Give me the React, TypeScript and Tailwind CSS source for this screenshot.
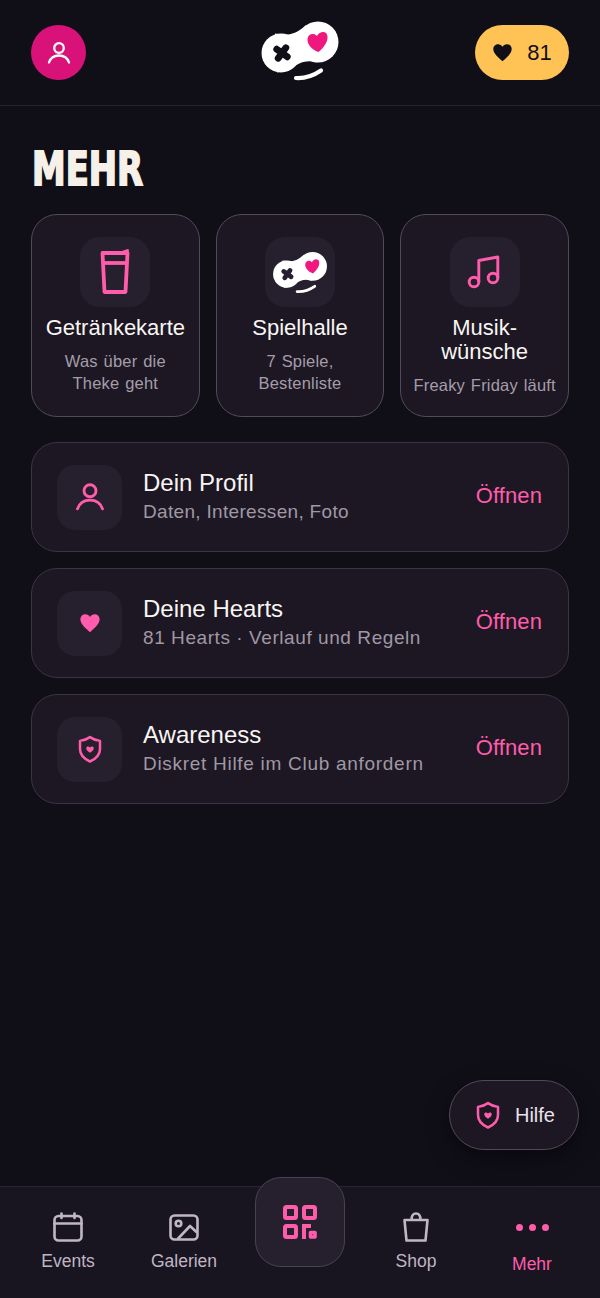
import React from "react";

function Logo({ hole, className }: { hole: string; className: string }) {
  return (
    <svg viewBox="0 0 100 80" className={className}>
      <circle cx="31" cy="43" r="19.500" fill="#fff" />
      <circle cx="68" cy="32" r="20.500" fill="#fff" />
      <path d="M25 23.500C35 25 43 27 56 15L67 52.500C57 49 49 53 43 57C37 60 33 62 27 62.500Z" fill="#fff" />
      <g transform="translate(32 43) rotate(36)">
        <path d="M-6.500 0H6.500M0 -6.500V6.500" fill="none" stroke={hole} strokeWidth="6.800" strokeLinecap="round" />
      </g>
      <path d="M68.500 42C61 39.500 57 33.500 57.500 29C58 24 63.500 22.500 67 26C69.500 21 77 20 77.500 26.500C78 32 73.500 38 68.500 42Z" fill="#f0187f" />
      <path d="M46 68C55 68.500 63 66 71 60.500" fill="none" stroke="#fff" strokeWidth="4.200" strokeLinecap="round" />
    </svg>
  );
}

function UserIcon({ className }: { className: string }) {
  return (
    <svg viewBox="0 0 24 24" fill="none" stroke="currentColor" strokeWidth="2.300" strokeLinecap="round" className={className}>
      <circle cx="12" cy="7" r="4.800" />
      <path d="M2 21.500C3.500 17 7 14.500 12 14.500S20.500 17 22 21.500" />
    </svg>
  );
}

function ShieldHeart({ className }: { className: string }) {
  return (
    <svg viewBox="0 0 24 24" fill="none" stroke="currentColor" strokeWidth="2" strokeLinejoin="round" className={className}>
      <path d="M12 2.500C14.500 4.300 17 5.200 20 5.500V12C20 16.500 17 19.800 12 22C7 19.800 4 16.500 4 12V5.500C7 5.200 9.500 4.300 12 2.500Z" />
      <path d="M12 15C9.800 13.500 9 12.400 9 11.300C9 9.800 10.900 9.400 12 10.700C13.100 9.400 15 9.800 15 11.300C15 12.400 14.200 13.500 12 15Z" fill="currentColor" stroke="none" />
    </svg>
  );
}

function Heart({ className }: { className: string }) {
  return (
    <svg viewBox="0 0 24 24" fill="currentColor" className={className}>
      <path d="M12 22C5.500 16.500 1.500 12.500 1.500 8C1.500 4.500 4.200 2.500 7 2.500C9 2.500 11 3.500 12 5.500C13 3.500 15 2.500 17 2.500C19.800 2.500 22.500 4.500 22.500 8C22.500 12.500 18.500 16.500 12 22Z" />
    </svg>
  );
}

function Glass({ className }: { className: string }) {
  return (
    <svg viewBox="0 0 32 46" fill="none" stroke="currentColor" strokeWidth="3.800" strokeLinejoin="round" className={className}>
      <path d="M3.500 4H28.500L26.500 43H5.500Z" />
      <path d="M4 14H28" />
      <path d="M22.500 3L29 0.800V4Z" fill="currentColor" strokeWidth="1.600" />
    </svg>
  );
}

function MusicIcon({ className }: { className: string }) {
  return (
    <svg viewBox="0 0 40 40" fill="none" stroke="currentColor" strokeWidth="2.900" strokeLinejoin="round" className={className}>
      <circle cx="9" cy="30" r="4.800" />
      <circle cx="28" cy="26" r="4.800" />
      <path d="M13.800 30V8.500L32.800 5V26" />
    </svg>
  );
}

function CalendarIcon({ className }: { className: string }) {
  return (
    <svg viewBox="0 0 30 30" fill="none" stroke="currentColor" strokeWidth="2.600" strokeLinecap="round" className={className}>
      <rect x="1.500" y="4" width="27" height="24.500" rx="4" />
      <path d="M1.500 11.500H28.500M8.500 1.500V6M21.500 1.500V6" />
    </svg>
  );
}

function PictureIcon({ className }: { className: string }) {
  return (
    <svg viewBox="0 0 30 27" fill="none" stroke="currentColor" strokeWidth="2.600" strokeLinejoin="round" className={className}>
      <rect x="1.500" y="1.500" width="27" height="24" rx="4" />
      <circle cx="9.500" cy="9.500" r="2.800" />
      <path d="M8.700 25L21 12L28 18.500" />
    </svg>
  );
}

function Bag({ className }: { className: string }) {
  return (
    <svg viewBox="0 0 28 32" fill="none" stroke="currentColor" strokeWidth="2.600" strokeLinejoin="round" className={className}>
      <path d="M2.500 9H25.500L23.500 29.500H4.500Z" />
      <path d="M9.500 9C9.500 5 11 2.500 14 2.500S18.500 5 18.500 9" />
    </svg>
  );
}

function Qr({ className }: { className: string }) {
  return (
    <svg viewBox="0 0 36 36" fill="none" stroke="currentColor" strokeWidth="4" strokeLinejoin="round" className={className}>
      <rect x="3" y="3" width="11" height="11" rx="1.500" />
      <rect x="22" y="3" width="11" height="11" rx="1.500" />
      <rect x="3" y="22" width="11" height="11" rx="1.500" />
      <path d="M20 22H29M22 20V35" />
      <rect x="28.500" y="28.500" width="4.500" height="4.500" strokeWidth="3.600" />
    </svg>
  );
}

function TopCard({ title, sub, icon }: { title: React.ReactNode; sub: React.ReactNode; icon: React.ReactNode }) {
  return (
    <div className="flex h-[203px] flex-col items-center rounded-[26px] border border-[#524a5b] bg-[#1c1723] pt-[22px] text-center">
      <div className="flex h-[70px] w-[70px] items-center justify-center rounded-[20px] bg-[#261f2d]">{icon}</div>
      <div className="mt-[9px] text-[22px] leading-[24px] text-[#f8f5f2]">{title}</div>
      <div className="mt-[10px] text-[16.5px] leading-[22px] tracking-[0.2px] [word-spacing:1px] text-[#a59daa]">{sub}</div>
    </div>
  );
}

function Row({ title, sub, icon, track }: { title: string; sub: string; icon: React.ReactNode; track: string }) {
  return (
    <div className="flex h-[110px] items-center rounded-[26px] border border-[#3c3444] bg-[#1c1723] pr-[26px] pl-[25px]">
      <div className="flex h-[65px] w-[65px] items-center justify-center rounded-[18px] bg-[#261f2d]">{icon}</div>
      <div className="ml-[21px] flex-1">
        <div className="text-[24px] leading-[28px] text-[#f8f5f2]">{title}</div>
        <div className={`mt-[1px] text-[19px] leading-[28px] text-[#a098a5] ${track}`}>{sub}</div>
      </div>
      <div className="pb-[3px] text-[22px] tracking-[0.1px] text-[#ff5cab]">Öffnen</div>
    </div>
  );
}

function NavItem({ label, icon, active }: { label: string; icon: React.ReactNode; active?: boolean }) {
  return (
    <div className={`flex flex-col items-center ${active ? "text-[#ff5cab]" : "text-[#c0b6c6]"}`}>
      <div className="flex h-[32px] items-center justify-center">{icon}</div>
      <div className={`text-[17.5px] leading-[24px] ${active ? "mt-[9px]" : "mt-[6px]"}`}>{label}</div>
    </div>
  );
}

export default function App() {
  return (
    <div className="relative flex min-h-[1298px] flex-col bg-[#100e17] font-['Liberation_Sans',sans-serif]">
      <header className="grid h-[106px] grid-cols-3 items-center border-b border-[#28242e] px-[31px]">
        <div className="flex h-[55px] w-[55px] items-center justify-center rounded-full bg-[#d9127a] text-white">
          <UserIcon className="h-[24px] w-[24px]" />
        </div>
        <div className="-mt-[5px] flex justify-center">
          <Logo hole="#100e17" className="h-[80px] w-[100px] shrink-0" />
        </div>
        <div className="flex h-[55px] w-[94px] items-center justify-center gap-[14px] justify-self-end rounded-full bg-[#ffc355] text-[#100e17]">
          <Heart className="h-[21px] w-[21px]" />
          <span className="text-[22px]">81</span>
        </div>
      </header>

      <main className="flex-1 px-[31px]">
        <h1 className="mt-[35px] ml-[1px] h-[73px] origin-left scale-x-[0.72] font-['DejaVu_Sans',sans-serif] text-[47px] leading-[56px] font-bold text-[#f5f0e8] [-webkit-text-stroke:2px_#f5f0e8]">MEHR</h1>
        <div className="grid grid-cols-3 gap-[16px]">
          <TopCard title="Getränkekarte" sub={<>Was über die<br />Theke geht</>} icon={<Glass className="h-[46px] w-[32px] text-[#ff5cab]" />} />
          <TopCard title="Spielhalle" sub={<>7 Spiele,<br />Bestenliste</>} icon={<Logo hole="#261f2d" className="h-[56px] w-[70px]" />} />
          <TopCard title={<>Musik-<br />wünsche</>} sub="Freaky Friday läuft" icon={<MusicIcon className="h-[40px] w-[40px] text-[#ff5cab]" />} />
        </div>
        <div className="mt-[25px] flex flex-col gap-[16px]">
          <Row title="Dein Profil" sub="Daten, Interessen, Foto" track="tracking-[0.32px]" icon={<UserIcon className="h-[30px] w-[30px] text-[#ff5cab]" />} />
          <Row title="Deine Hearts" sub="81 Hearts · Verlauf und Regeln" track="tracking-[0.57px]" icon={<Heart className="h-[22px] w-[22px] text-[#ff5cab]" />} />
          <Row title="Awareness" sub="Diskret Hilfe im Club anfordern" track="tracking-[0.71px]" icon={<ShieldHeart className="h-[30px] w-[30px] text-[#ff5cab]" />} />
        </div>
      </main>

      <div className="absolute top-[1080px] left-[449px] flex h-[70px] w-[130px] items-center justify-center gap-[12px] rounded-full border border-[#524a5b] bg-[#1c1723] text-[#e8e2ea] shadow-[0_8px_24px_rgba(0,0,0,0.4)]">
        <ShieldHeart className="h-[30px] w-[30px] text-[#ff5cab]" />
        <span className="text-[20px]">Hilfe</span>
      </div>

      <nav className="grid h-[112px] grid-cols-5 border-t border-[#28242e] bg-[#181420] px-[10px] pt-[24px]">
        <NavItem label="Events" icon={<CalendarIcon className="h-[30px] w-[30px]" />} />
        <NavItem label="Galerien" icon={<PictureIcon className="h-[27px] w-[30px]" />} />
        <div className="flex justify-center">
          <div className="-mt-[34px] flex h-[90px] w-[90px] items-center justify-center rounded-[26px] border border-[#4a4252] bg-[#261f2d] text-[#ff5cab]">
            <Qr className="h-[36px] w-[36px]" />
          </div>
        </div>
        <NavItem label="Shop" icon={<Bag className="h-[32px] w-[28px]" />} />
        <NavItem
          active
          label="Mehr"
          icon={
            <div className="flex gap-[6px]">
              <span className="h-[7px] w-[7px] rounded-full bg-[#ff5cab]" />
              <span className="h-[7px] w-[7px] rounded-full bg-[#ff5cab]" />
              <span className="h-[7px] w-[7px] rounded-full bg-[#ff5cab]" />
            </div>
          }
        />
      </nav>
    </div>
  );
}
